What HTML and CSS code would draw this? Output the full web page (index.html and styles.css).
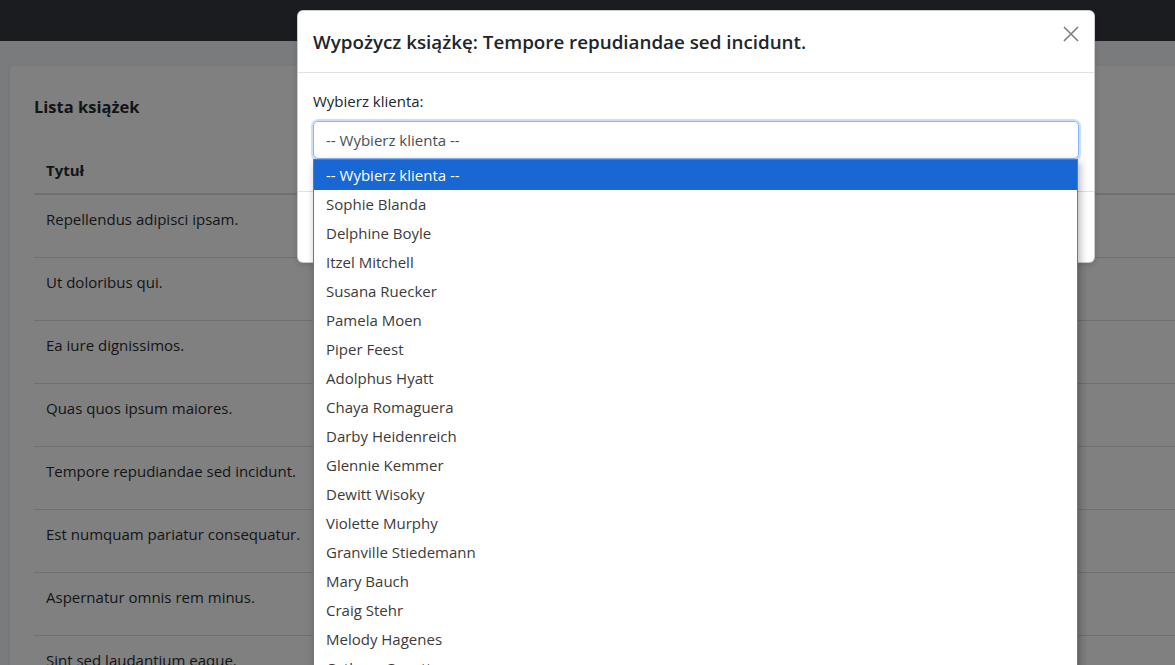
FILE: index.html
```html
<!DOCTYPE html>
<html lang="pl">
<head>
<meta charset="utf-8">
<title>Biblioteka</title>
<link rel="stylesheet" href="styles.css">
</head>
<body class="modal-open">
<div class="app">
  <nav class="navbar"></nav>
  <main class="page">
    <section class="card">
      <h2 class="card-title">Lista książek</h2>
      <table class="table">
        <thead>
          <tr><th>Tytuł</th></tr>
        </thead>
        <tbody>
          <tr><td>Repellendus adipisci ipsam.</td></tr>
          <tr><td>Ut doloribus qui.</td></tr>
          <tr><td>Ea iure dignissimos.</td></tr>
          <tr><td>Quas quos ipsum maiores.</td></tr>
          <tr><td>Tempore repudiandae sed incidunt.</td></tr>
          <tr><td>Est numquam pariatur consequatur.</td></tr>
          <tr><td>Aspernatur omnis rem minus.</td></tr>
          <tr><td>Sint sed laudantium eaque.</td></tr>
        </tbody>
      </table>
    </section>
  </main>
</div>
<div class="modal-layer">
  <div class="modal">
    <div class="modal-header">
      <h5 class="modal-title">Wypożycz książkę: Tempore repudiandae sed incidunt.</h5>
      <button class="btn-close" aria-label="Zamknij">
        <svg viewBox="0 0 16 16" width="16" height="16"><path d="M1 1 15 15M15 1 1 15" stroke="#000" stroke-width="1.6" fill="none"/></svg>
      </button>
    </div>
    <div class="modal-body">
      <label class="form-label">Wybierz klienta:</label>
      <div class="select-wrap">
        <div class="form-select">-- Wybierz klienta --</div>
        <ul class="dropdown">
          <li class="active">-- Wybierz klienta --</li>
          <li>Sophie Blanda</li>
          <li>Delphine Boyle</li>
          <li>Itzel Mitchell</li>
          <li>Susana Ruecker</li>
          <li>Pamela Moen</li>
          <li>Piper Feest</li>
          <li>Adolphus Hyatt</li>
          <li>Chaya Romaguera</li>
          <li>Darby Heidenreich</li>
          <li>Glennie Kemmer</li>
          <li>Dewitt Wisoky</li>
          <li>Violette Murphy</li>
          <li>Granville Stiedemann</li>
          <li>Mary Bauch</li>
          <li>Craig Stehr</li>
          <li>Melody Hagenes</li>
          <li>Cathryn Goyette</li>
        </ul>
      </div>
    </div>
    <div class="modal-footer">
      <button class="btn btn-secondary">Anuluj</button>
      <button class="btn btn-primary">Wypożycz</button>
    </div>
  </div>
</div>
</body>
</html>
```
FILE: styles.css
```css
* { box-sizing: border-box; }

html, body {
  margin: 0;
}

body {
  font-family: "Open Sans", "Noto Sans", sans-serif;
  font-size: 15px;
  line-height: 24px;
  color: #212529;
  height: 665px;
  overflow: hidden;
  position: relative;
  background: #f4f6fa;
}

.app {
  height: 665px;
}

.navbar {
  height: 41px;
  background: #353a40;
}

.page {
  padding: 25px 0 0 10px;
}

.card {
  background: #fff;
  margin-right: -30px;
  padding: 29px 24px 0;
  min-height: 700px;
}

.card-title {
  margin: 0 0 27px;
  font-size: 16.5px;
  line-height: 24px;
  font-weight: 700;
}

.table {
  width: 100%;
  border-collapse: collapse;
}

.table th {
  text-align: left;
  font-weight: 700;
  padding: 12px 12px 11px;
  border-bottom: 2px solid #dee2e6;
}

.table td {
  padding: 12px 12px 26px;
  border-top: 1px solid #dee2e6;
  vertical-align: top;
}

/* page colours as seen through the 50% black modal backdrop */
.modal-open { background: #7a7b7d; }
.modal-open .navbar { background: #1b1c20; }
.modal-open .card {
  background: #808080;
  color: #121416;
  box-shadow: -1px 0 2px rgba(0, 0, 0, 0.06);
}
.modal-open .table th { border-bottom-color: #6e7072; }
.modal-open .table td { border-top-color: #6e7072; }

.modal-layer {
  position: absolute;
  top: 0;
  left: 0;
  width: 100%;
  height: 100%;
  padding: 10px 0 0 297px;
  z-index: 10;
}

.modal {
  position: relative;
  width: 798px;
  background: #fff;
  border: 1px solid rgba(0, 0, 0, 0.2);
  border-radius: 6px;
  box-shadow: 0 2px 6px rgba(0, 0, 0, 0.15);
}

.modal-header {
  display: flex;
  align-items: flex-start;
  justify-content: space-between;
  padding: 15px 15px;
  height: 62px;
  border-bottom: 1px solid #dee2e6;
}

.modal-title {
  margin: 0;
  font-size: 18.8px;
  line-height: 32px;
  font-weight: 600;
  color: #212529;
}

.btn-close {
  width: 16px;
  height: 16px;
  padding: 0;
  border: 0;
  background: transparent;
  opacity: 0.5;
  display: flex;
}

.modal-body {
  padding: 16px 15px 16px;
}

.form-label {
  display: block;
  margin-bottom: 8px;
  line-height: 24px;
}

.select-wrap {
  position: relative;
  margin-bottom: 16px;
}

.form-select {
  height: 38px;
  padding: 6px 12px;
  line-height: 24px;
  color: #495057;
  border: 1px solid #86b7fe;
  border-radius: 5px;
  box-shadow: 0 0 0 2px rgba(13, 110, 253, 0.22);
}

.dropdown {
  position: absolute;
  top: 38px;
  left: 0;
  width: 765px;
  margin: 0;
  padding: 0;
  list-style: none;
  background: #fff;
  border: 1px solid #767676;
  box-shadow: 2px 3px 8px rgba(0, 0, 0, 0.3);
  z-index: 2;
}

.dropdown li {
  height: 29px;
  line-height: 29px;
  padding: 0 12px;
  color: #3b3b3b;
  white-space: nowrap;
}

.dropdown li.active {
  height: 30px;
  line-height: 31px;
  background: #1967d2;
  color: #fff;
}

.modal-footer {
  display: flex;
  justify-content: flex-end;
  gap: 8px;
  padding: 16px 24px 16px 15px;
  border-top: 1px solid #dee2e6;
}

.btn {
  font: inherit;
  height: 38px;
  padding: 6px 12px;
  border-radius: 5px;
  border: 1px solid transparent;
  color: #fff;
}

.btn-secondary { background: #6c757d; }
.btn-primary { background: #0d6efd; }
```
